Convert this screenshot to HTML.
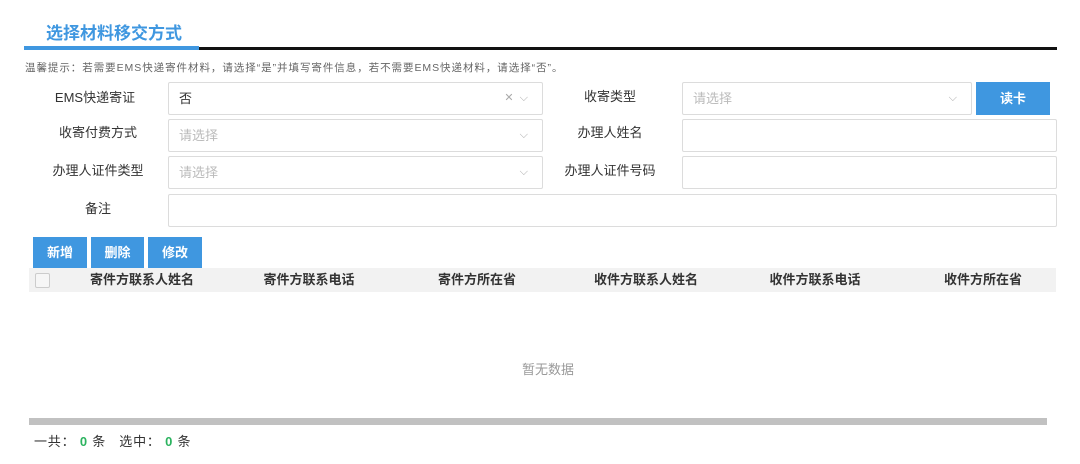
<!DOCTYPE html><html><head><meta charset="utf-8"><style>
*{margin:0;padding:0;box-sizing:border-box}
body{width:1080px;height:464px;background:#fff;font-family:"Liberation Sans","Noto Sans CJK SC",sans-serif;position:relative;overflow:hidden;color:#333}
.a{position:absolute}
.in{position:absolute;border:1px solid #dcdcdc;border-radius:2px;height:33px;font-size:13px;line-height:31px;padding-left:10px;color:#bbb}
.lb{position:absolute;font-size:13px;color:#333;text-align:center;line-height:33px}
.ch{position:absolute;right:14px;top:0;color:#aaa;font-size:11px}
.bt{position:absolute;background:#3f97e0;color:#fff;font-size:13px;font-weight:bold;text-align:center;line-height:31px;top:237px;height:31px}
.th{position:absolute;top:268px;font-size:13px;font-weight:bold;line-height:24px;text-align:center;width:170px;color:#333}
</style></head><body>
<div class="a" style="left:46px;top:19px;font-size:17px;font-weight:bold;color:#3f97e0">选择材料移交方式</div>
<div class="a" style="left:24px;top:47px;width:1033px;height:3px;background:#111"></div>
<div class="a" style="left:24px;top:46px;width:175px;height:4px;background:#3f97e0"></div>
<div class="a" style="left:25px;top:60px;font-size:10.5px;color:#666;letter-spacing:0.95px">温馨提示：若需要EMS快递寄件材料，请选择“是”并填写寄件信息，若不需要EMS快递材料，请选择“否”。</div>
<div class="lb" style="left:30px;top:81px;width:130px">EMS快递寄证</div>
<div class="in" style="left:168px;top:82px;width:375px;color:#333">否<span class="ch">✕ &nbsp;⌵</span></div>
<div class="lb" style="left:545px;top:80px;width:130px">收寄类型</div>
<div class="in" style="left:682px;top:82px;width:290px">请选择<span class="ch">⌵</span></div>
<div class="a" style="left:976px;top:82px;width:74px;height:33px;background:#3f97e0;color:#fff;font-size:13px;font-weight:bold;text-align:center;line-height:33px">读卡</div>
<div class="lb" style="left:33px;top:116px;width:130px">收寄付费方式</div>
<div class="in" style="left:168px;top:119px;width:375px">请选择<span class="ch">⌵</span></div>
<div class="lb" style="left:545px;top:116px;width:130px">办理人姓名</div>
<div class="in" style="left:682px;top:119px;width:375px"></div>
<div class="lb" style="left:33px;top:154px;width:130px">办理人证件类型</div>
<div class="in" style="left:168px;top:156px;width:375px">请选择<span class="ch">⌵</span></div>
<div class="lb" style="left:545px;top:154px;width:130px">办理人证件号码</div>
<div class="in" style="left:682px;top:156px;width:375px"></div>
<div class="lb" style="left:33px;top:192px;width:130px">备注</div>
<div class="in" style="left:168px;top:194px;width:889px"></div>
<div class="bt" style="left:33px;width:54px">新增</div>
<div class="bt" style="left:91px;width:53px">删除</div>
<div class="bt" style="left:148px;width:54px">修改</div>
<div class="a" style="left:29px;top:268px;width:1027px;height:24px;background:#f2f2f2"></div>
<div class="a" style="left:35px;top:273px;width:15px;height:15px;border:1px solid #ccc;background:#f6f6f6;border-radius:2px"></div>
<div class="th" style="left:57px">寄件方联系人姓名</div>
<div class="th" style="left:224px">寄件方联系电话</div>
<div class="th" style="left:392px">寄件方所在省</div>
<div class="th" style="left:561px">收件方联系人姓名</div>
<div class="th" style="left:730px">收件方联系电话</div>
<div class="th" style="left:898px">收件方所在省</div>
<div class="a" style="left:498px;top:359px;width:100px;text-align:center;font-size:13px;color:#999">暂无数据</div>
<div class="a" style="left:29px;top:418px;width:1018px;height:7px;background:#c1c1c1"></div>
<div class="a" style="left:34px;top:431px;font-size:13px;color:#333;white-space:pre;letter-spacing:0.8px">一共： <b style="color:#2cb35f">0</b> 条   选中： <b style="color:#2cb35f">0</b> 条</div>
</body></html>
